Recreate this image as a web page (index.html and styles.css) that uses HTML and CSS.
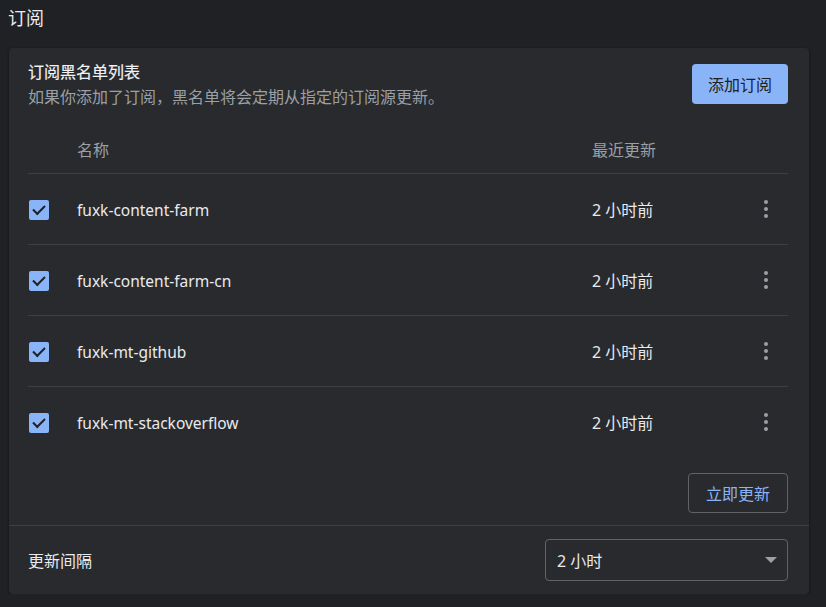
FILE: index.html
```html
<!DOCTYPE html>
<html lang="zh-CN">
<head>
  <meta charset="UTF-8" />
  <title>订阅</title>
  <link rel="stylesheet" href="styles.css">
</head>
<body>
  <div class="page">
    <h1 class="page-title">订阅</h1>

    <div class="card">
      <!-- Card header -->
      <div class="card-head">
        <div class="card-head-text">
          <div class="card-title">订阅黑名单列表</div>
          <div class="card-desc">如果你添加了订阅，黑名单将会定期从指定的订阅源更新。</div>
        </div>
        <button class="btn-primary">添加订阅</button>
      </div>

      <!-- Subscription table -->
      <div class="table">
        <div class="row row-head">
          <div class="col-check"></div>
          <div class="col-name">名称</div>
          <div class="col-time">最近更新</div>
          <div class="col-menu"></div>
        </div>

        <div class="row">
          <div class="col-check"><span class="checkbox checked"></span></div>
          <div class="col-name">fuxk-content-farm</div>
          <div class="col-time">2 小时前</div>
          <div class="col-menu"><span class="kebab"><i></i><i></i><i></i></span></div>
        </div>
        <div class="row">
          <div class="col-check"><span class="checkbox checked"></span></div>
          <div class="col-name">fuxk-content-farm-cn</div>
          <div class="col-time">2 小时前</div>
          <div class="col-menu"><span class="kebab"><i></i><i></i><i></i></span></div>
        </div>
        <div class="row">
          <div class="col-check"><span class="checkbox checked"></span></div>
          <div class="col-name">fuxk-mt-github</div>
          <div class="col-time">2 小时前</div>
          <div class="col-menu"><span class="kebab"><i></i><i></i><i></i></span></div>
        </div>
        <div class="row">
          <div class="col-check"><span class="checkbox checked"></span></div>
          <div class="col-name">fuxk-mt-stackoverflow</div>
          <div class="col-time">2 小时前</div>
          <div class="col-menu"><span class="kebab"><i></i><i></i><i></i></span></div>
        </div>
      </div>

      <div class="table-actions">
        <button class="btn-outline">立即更新</button>
      </div>

      <!-- Update interval -->
      <div class="card-foot">
        <div class="foot-label">更新间隔</div>
        <div class="select">
          <span>2 小时</span>
          <span class="caret"></span>
        </div>
      </div>
    </div>
  </div>
</body>
</html>
```

FILE: styles.css
```css
/* ==========================
   PAGE
=========================== */
body {
  margin: 0;
  background-color: #202124;
  color: #e8eaed;
  font-family: "Noto Sans", "Noto Sans CJK SC", sans-serif;
  font-size: 16px;
}

.page {
  padding: 0 17px 0 9px;
}

.page-title {
  margin: 0;
  height: 48px;
  line-height: 36px;
  font-size: 18px;
  font-weight: normal;
  color: #e8eaed;
  position: relative;
  left: -1px;
}

/* ==========================
   CARD
=========================== */
.card {
  background-color: #292a2d;
  border-radius: 4px;
  box-shadow: 0 1px 3px rgba(0, 0, 0, 0.5);
  height: 546px;
  display: flex;
  flex-direction: column;
}

.card-head {
  display: flex;
  justify-content: space-between;
  align-items: flex-start;
  padding: 16px 21px 0 19px;
  height: 62px;
}

.card-title {
  font-size: 16px;
  line-height: 22px;
  margin-top: -3px;
  color: #f1f3f4;
  -webkit-text-stroke: 0.2px #f1f3f4;
}

.card-desc {
  font-size: 16px;
  line-height: 22px;
  margin-top: 3px;
  color: #9aa0a6;
}

.btn-primary {
  background-color: #8ab4f8;
  color: #202124;
  border: none;
  border-radius: 4px;
  width: 96px;
  height: 40px;
  font-family: inherit;
  font-size: 16px;
  cursor: pointer;
}

/* ==========================
   TABLE
=========================== */
.table {
  margin: 0 21px 0 19px;
}

.row {
  display: flex;
  align-items: center;
  height: 70px;
  border-bottom: 1px solid #3c4043;
}

.row:last-child {
  border-bottom: none;
}

.row-head {
  height: 48px;
  margin-top: 16px;
  color: #9aa0a6;
}

.col-check {
  width: 49px;
  display: flex;
  align-items: center;
}

.col-name {
  flex: 1;
  font-size: 15.5px;
  padding-top: 2px;
}

.row-head .col-name {
  font-size: 16px;
  padding-top: 0;
}

.col-time {
  width: 152px;
}

.col-menu {
  width: 44px;
  display: flex;
  justify-content: center;
}

.checkbox {
  width: 20px;
  height: 20px;
  margin: 1px 0 0 1px;
  border-radius: 2px;
  background-color: #8ab4f8;
  position: relative;
}

.checkbox.checked::after {
  content: "";
  position: absolute;
  left: 4px;
  top: 4px;
  width: 10px;
  height: 5px;
  border-left: 2.5px solid #202124;
  border-bottom: 2.5px solid #202124;
  transform: translate(0, 1px) rotate(-45deg);
}

.kebab {
  display: flex;
  flex-direction: column;
  gap: 3px;
}

.kebab i {
  width: 4px;
  height: 4px;
  border-radius: 50%;
  background-color: #9aa0a6;
}

/* ==========================
   ACTIONS & FOOTER
=========================== */
.table-actions {
  display: flex;
  justify-content: flex-end;
  padding: 16px 21px 12px;
  border-bottom: 1px solid #3c4043;
}

.btn-outline {
  background: transparent;
  color: #8ab4f8;
  border: 1px solid #5f6368;
  border-radius: 4px;
  width: 100px;
  height: 40px;
  font-family: inherit;
  font-size: 16px;
  cursor: pointer;
}

.card-foot {
  display: flex;
  justify-content: space-between;
  align-items: center;
  padding: 13px 21px 13px 19px;
}

.foot-label {
  color: #e8eaed;
}

.select {
  width: 243px;
  height: 42px;
  box-sizing: border-box;
  border: 1px solid #5f6368;
  border-radius: 4px;
  display: flex;
  justify-content: space-between;
  align-items: center;
  padding: 0 10px 0 11px;
}

.caret {
  width: 0;
  height: 0;
  border-left: 6px solid transparent;
  border-right: 6px solid transparent;
  border-top: 6px solid #9aa0a6;
}
```
